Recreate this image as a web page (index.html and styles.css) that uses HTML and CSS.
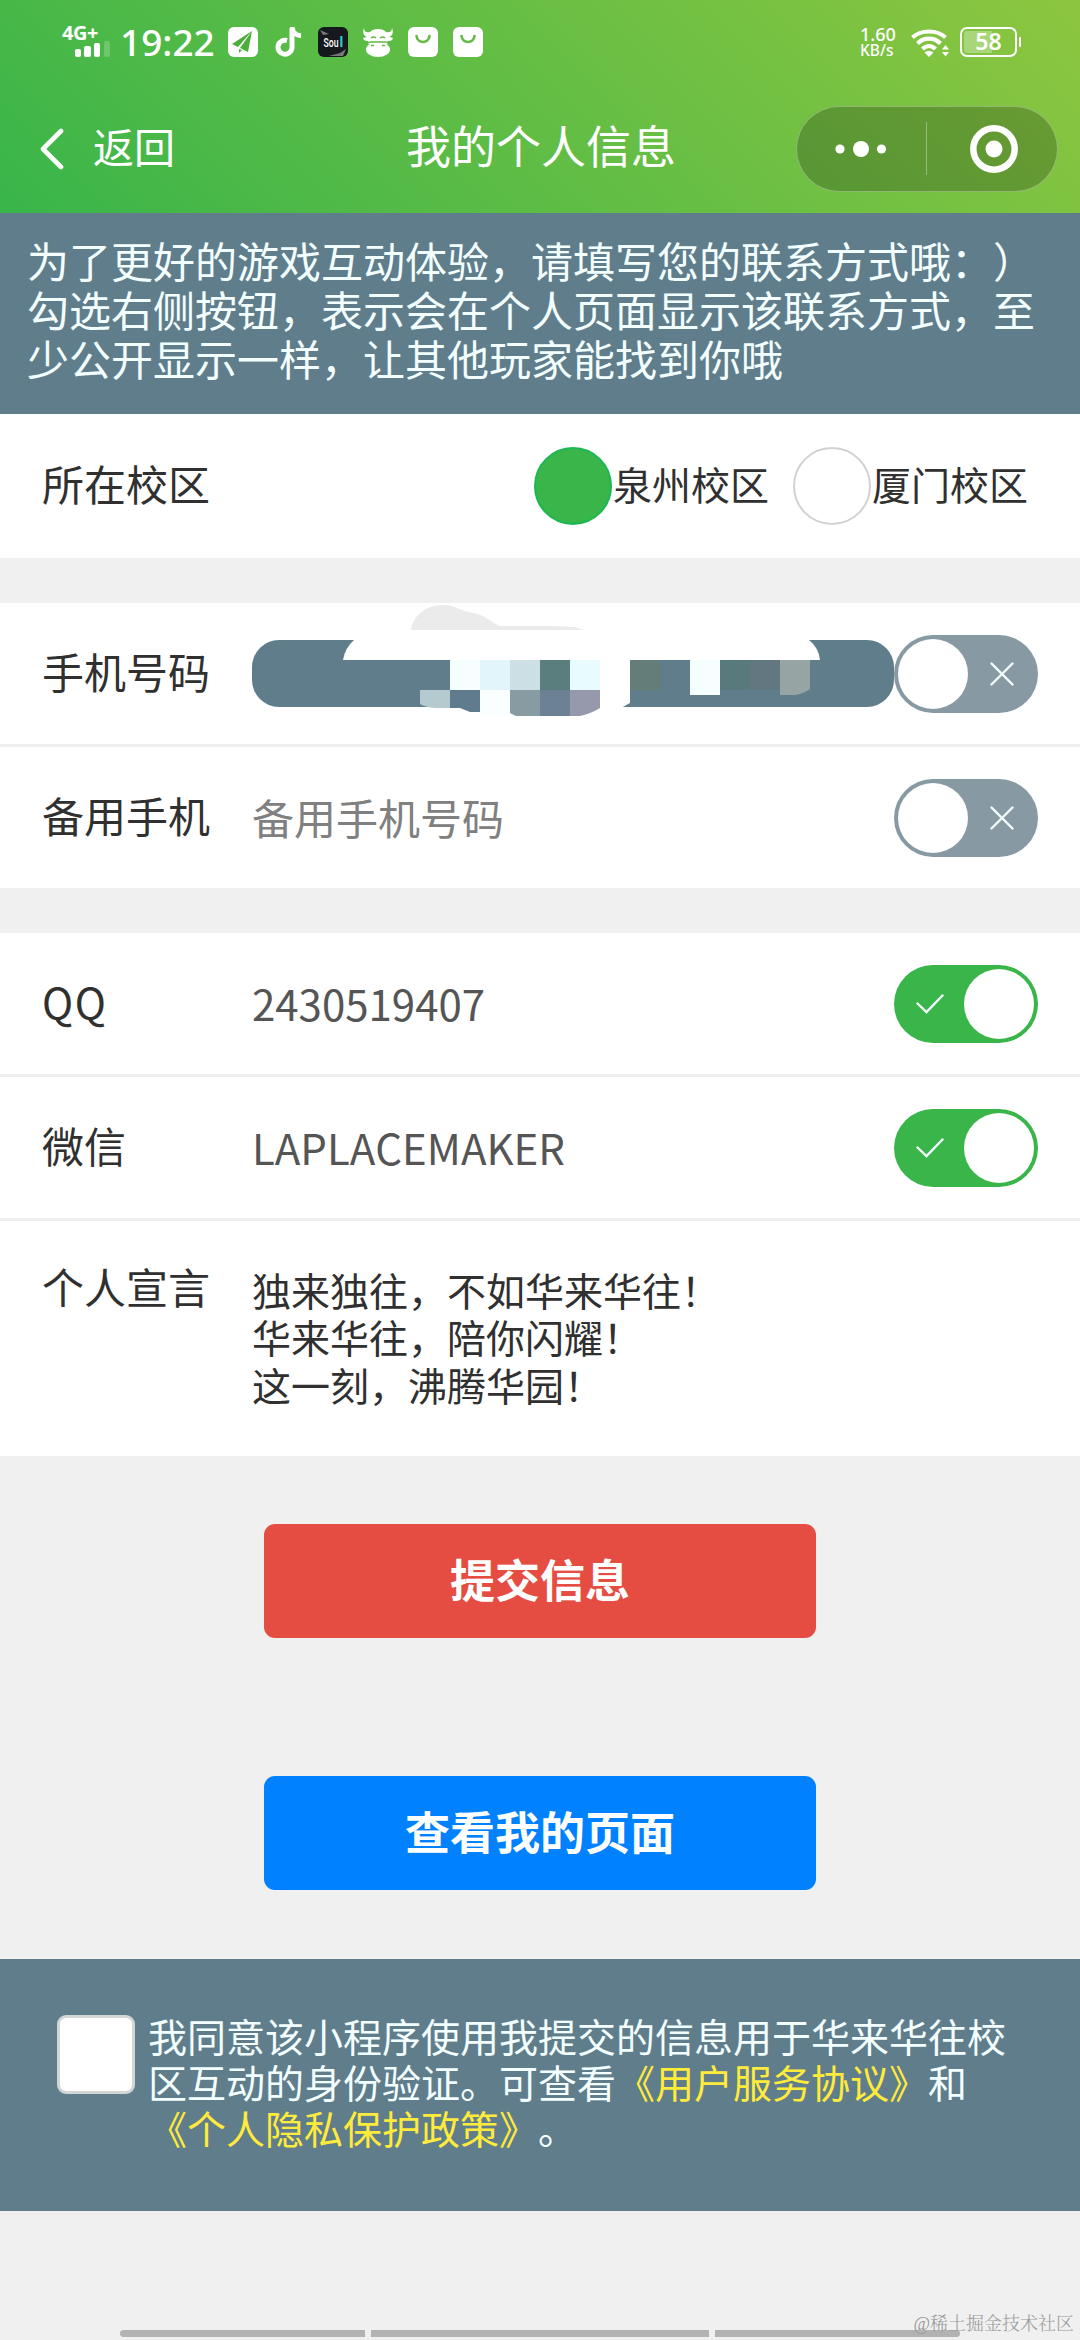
FILE: index.html
```html
<!DOCTYPE html>
<html lang="zh-CN">
<head>
<meta charset="utf-8">
<title>我的个人信息</title>
<link rel="stylesheet" href="styles.css">
</head>
<body>
<header class="header">
  <div class="status">
    <div class="signal">
      <span class="signal-net">4G+</span>
      <svg class="signal-bars" width="36" height="16" viewBox="0 0 36 16"><rect x="0" y="8" width="6" height="8" rx="2"/><rect x="9" y="5" width="7" height="11" rx="2"/><rect x="19" y="2" width="6" height="14" rx="2"/><rect x="29" y="0" width="6" height="16" rx="2" opacity=".2"/></svg>
    </div>
    <span class="clock">19:22</span>
    <div class="apps">
      <svg width="30" height="30" viewBox="0 0 30 30"><rect width="30" height="30" rx="6" fill="#fff"/><path d="M24 4 4 17l6 3zM24 4 12 21l8 4zM11 22v4l3-3z" fill="#4cad3d"/></svg>
      <svg width="30" height="30" viewBox="0 0 30 30"><path d="M14 13.500A7 7 0 1 0 19 21V1" fill="none" stroke="#fff" stroke-width="5"/><path d="M17 0h4.500c.5 4 3 6 6.500 6v5c-5 0-9-3-11-7z" fill="#fff"/></svg>
      <svg width="30" height="30" viewBox="0 0 30 30"><rect width="30" height="30" rx="6" fill="#15181c"/><path d="M2 3l9 4-6 1zM11 29l11-3 6-4-3 7z" fill="#777"/><text x="5.500" y="20" font-family="Roboto, sans-serif" font-size="13" font-weight="500" textLength="15" lengthAdjust="spacingAndGlyphs" fill="#fff">Sou</text><text x="21.500" y="20" font-family="Roboto, sans-serif" font-size="14" font-weight="700" fill="#25d4d0">l</text></svg>
      <svg width="30" height="30" viewBox="0 0 30 30"><path d="M1 1c0 4 3 5 6 4 3-4 13-4 16 0 3 1 6 0 6-4 2 5 0 8-3 9 2 0 3 1 4 1-1 3-3 3-5 3v3H5v-3c-2 0-4 0-5-3 1 0 2-1 4-1C1 9-1 6 1 1z" fill="#fff"/><path d="M8 11q2.500-2 5 0M17 11q2.500-2 5 0" stroke="#62b942" stroke-width="1.300" fill="none"/><ellipse cx="15" cy="22.500" rx="12" ry="7.500" fill="#fff"/><path d="M4.500 17q0-2 3-2h15q3 0 3 2" fill="none" stroke="#62b942" stroke-width="1.500"/><path d="M8 18.500h3M19 18.500h3" stroke="#62b942" stroke-width="1.500"/></svg>
      <svg width="30" height="30" viewBox="0 0 30 30"><rect width="30" height="30" rx="6" fill="#fff"/><path d="M8.500 9c1 8 12 8 13 0" fill="none" stroke="#65b944" stroke-width="2.600" stroke-linecap="round"/></svg>
      <svg width="30" height="30" viewBox="0 0 30 30"><rect width="30" height="30" rx="6" fill="#fff"/><path d="M8.500 9c1 8 12 8 13 0" fill="none" stroke="#65b944" stroke-width="2.600" stroke-linecap="round"/></svg>
    </div>
    <div class="speed"><span class="speed-num">1.60</span><span class="speed-unit">KB/s</span></div>
    <svg class="wifi" width="38" height="29" viewBox="0 0 38 29"><g fill="none" stroke="#fff" stroke-width="4.200"><path d="M1.500 9.500C10 1.500 26 1.500 34.500 9.500"/><path d="M6.500 15.500c6.500-6.500 16.500-6.500 23 0"/><path d="M11.500 21c4-4 9-4 13 0"/></g><path d="M13.500 24.500q4.500-3.500 9 0L18 29z" fill="#fff"/><path d="M31 21.500l3.500-4.500 3.500 4.500zM31 24h7l-3.500 4.500z" fill="#fff"/></svg>
    <div class="battery"><span>58</span></div>
  </div>
  <nav class="nav">
    <svg class="back" width="24" height="42" viewBox="0 0 24 42"><path d="M21 3 3 21l18 18" fill="none" stroke="#fff" stroke-width="4.600" stroke-linecap="round" stroke-linejoin="round"/></svg>
    <span class="back-text">返回</span>
    <h1 class="title">我的个人信息</h1>
    <div class="capsule">
      <svg width="260" height="84" viewBox="0 0 260 84" fill="#fff"><circle cx="43" cy="42" r="4.600"/><circle cx="64" cy="42" r="8"/><circle cx="84.500" cy="42" r="4.600"/><path d="M129 15h1v53h-1z" opacity=".35"/><circle cx="197" cy="42" r="20.700" fill="none" stroke="#fff" stroke-width="6.500"/><circle cx="197" cy="42" r="8.500"/></svg>
    </div>
  </nav>
</header>

<p class="notice">为了更好的游戏互动体验，请填写您的联系方式哦：）<br>勾选右侧按钮，表示会在个人页面显示该联系方式，至<br>少公开显示一样，让其他玩家能找到你哦</p>

<form class="form">
  <section class="group">
    <div class="row row-campus">
      <span class="label">所在校区</span>
      <div class="radios">
        <label class="radio"><i class="dot dot-on"></i><span>泉州校区</span></label>
        <label class="radio"><i class="dot"></i><span>厦门校区</span></label>
      </div>
    </div>
  </section>
  <section class="group">
    <div class="row">
      <span class="label">手机号码</span>
      <span class="phone-pill"></span>
      <span class="switch"><svg class="mark" width="24" height="24" viewBox="0 0 24 24"><path d="M1.500 1.500l21 21M22.500 1.500l-21 21"/></svg></span>
      <svg class="mosaic" width="480" height="120" viewBox="410 600 480 120">
        <path d="M343 660q2-12 11-20v-4h455v4q10 8 11 20z" fill="#fff"/>
        <path d="M411 630c2-14 14-25 32-25 12 0 20 7 30 8 9 1 18 8 26 13h52l24 1 9 3z" fill="#ebebeb"/>
        <path d="M450 660h30v30h-30z" fill="#f6ffff"/><path d="M480 660h30v30h-30z" fill="#e1f5fb"/><path d="M510 660h30v30h-30z" fill="#cbdfe5"/><path d="M540 660h30v30h-30z" fill="#5a7e7e"/><path d="M570 660h30v30h-30z" fill="#e8fbff"/>
        <path d="M600 660h30v43l-9 5-21 3z" fill="#fff"/>
        <path d="M630 660h30v30h-30z" fill="#657d79"/><path d="M690 660h30v35h-30z" fill="#f6ffff"/><path d="M720 660h30v30h-30z" fill="#587a7d"/><path d="M750 660h30v30h-30z" fill="#62777f"/><path d="M780 660h30v29q-7 5-15 6h-15z" fill="#96a5a3"/>
        <path d="M420 690h30v18h-15q-10-1-15-4z" fill="#b4cace"/><path d="M450 690h30v22h-10l-10-4h-10z" fill="#607b8d"/><path d="M480 690h30v26h-30z" fill="#fafefe"/><path d="M510 690h30v26h-24l-6-3z" fill="#879ba3"/><path d="M540 690h30v26h-30z" fill="#6c8194"/><path d="M570 690h30v18q-10 6-20 8h-10z" fill="#9698ac"/>
      </svg>
    </div>
    <div class="row">
      <span class="label">备用手机</span>
      <span class="value placeholder">备用手机号码</span>
      <span class="switch"><svg class="mark" width="24" height="24" viewBox="0 0 24 24"><path d="M1.500 1.500l21 21M22.500 1.500l-21 21"/></svg></span>
    </div>
  </section>
  <section class="group">
    <div class="row">
      <span class="label label-latin">QQ</span>
      <span class="value">2430519407</span>
      <span class="switch switch-on"><svg class="mark" width="28" height="20" viewBox="0 0 28 20"><path d="M1.500 9.500l9 8.500 16-16.500"/></svg></span>
    </div>
    <div class="row">
      <span class="label">微信</span>
      <span class="value">LAPLACEMAKER</span>
      <span class="switch switch-on"><svg class="mark" width="28" height="20" viewBox="0 0 28 20"><path d="M1.500 9.500l9 8.500 16-16.500"/></svg></span>
    </div>
    <div class="row row-bio">
      <span class="label">个人宣言</span>
      <p class="bio">独来独往，不如华来华往！<br>华来华往，陪你闪耀！<br>这一刻，沸腾华园！</p>
    </div>
  </section>
  <div class="actions">
    <button type="button" class="btn btn-red">提交信息</button>
    <button type="button" class="btn btn-blue">查看我的页面</button>
  </div>
</form>

<section class="agree">
  <i class="checkbox"></i>
  <p class="agree-text">我同意该小程序使用我提交的信息用于华来华往校<br>区互动的身份验证。可查看<a class="link">《用户服务协议》</a>和<br><a class="link">《个人隐私保护政策》</a>。</p>
</section>

<footer class="footer">
  <div class="gesture"><i class="g1"></i><i class="g2"></i><i class="g1"></i></div>
  <span class="watermark">@稀土掘金技术社区</span>
</footer>
</body>
</html>
```
FILE: styles.css
```css
* { box-sizing: border-box; margin: 0; padding: 0; }
html { font-kerning: none; }
body {
  width: 1080px;
  height: 2340px;
  overflow: hidden;
  display: flex;
  flex-direction: column;
  background: #f0f0f0;
  color: #303030;
  font-family: "Noto Sans CJK SC", sans-serif;
  font-size: 42px;
  text-spacing-trim: space-all;
}
svg { display: block; flex: none; }
i { display: block; flex: none; }

.header {
  height: 213px;
  color: #fff;
  background: linear-gradient(45deg, #39b54a, #8dc63f);
}
.status { height: 84px; display: flex; align-items: center; padding: 0 60px 0 62px; }
.signal { width: 58px; height: 34px; display: flex; flex-direction: column; }
.signal-net { height: 16px; font: 700 20px/16px "Noto Sans", sans-serif; letter-spacing: -.5px; }
.signal-bars { margin-left: 13px; fill: #fff; }
.clock { width: 108px; font: 500 37px/50px "Noto Sans", sans-serif; }
.apps { display: flex; gap: 15px; }
.speed { margin-left: 377px; width: 51px; display: flex; flex-direction: column; font-family: "Noto Sans", sans-serif; font-weight: 500; }
.speed-num { font-size: 18px; line-height: 17px; }
.speed-unit { font-size: 15.5px; line-height: 15px; }
.wifi { margin-right: 11px; }
.battery {
  position: relative;
  width: 57px;
  height: 30px;
  border: 2.5px solid #fff;
  border-radius: 7px;
  text-align: center;
  font: 600 23px/25px "Noto Sans", sans-serif;
  background: linear-gradient(90deg, rgba(255,255,255,.3) 58%, transparent 58%) content-box;
  padding: 2px;
}
.battery span { display: block; margin-top: -2px; }
.battery::after { content: ""; position: absolute; right: -6px; top: 8px; width: 2px; height: 10px; background: #fff; border-radius: 1px; }

.nav { height: 129px; display: flex; align-items: center; padding-left: 40px; }
.back { margin-right: 29px; }
.back-text { width: 313px; font-size: 41px; line-height: 60px; padding-bottom: 7px; }
.title { width: 390px; font-size: 45px; font-weight: 400; line-height: 66px; padding-bottom: 7px; }
.capsule { width: 262px; height: 86px; border: 1px solid rgba(255,255,255,.3); border-radius: 43px; background: rgba(0,0,0,.21); }

.notice { height: 201px; padding: 22px 27px 0; background: #607d8b; color: #f3ffff; line-height: 49.2px; white-space: nowrap; }

.group { margin-bottom: 45px; background: #fff; }
.group:last-of-type { margin-bottom: 0; }
.row { position: relative; height: 141px; display: flex; align-items: center; padding: 0 42px; }
.row + .row { height: 144px; border-top: 3px solid #eee; }
.label { width: 210px; flex: none; line-height: 60px; padding-bottom: 6px; }
.label-latin { letter-spacing: 1.5px; }
.value { flex: 1; color: #555; padding-bottom: 3px; }
.placeholder { color: #808080; }
.row-campus { height: 144px; padding-right: 52px; }
.row-campus .label { padding-bottom: 7px; }
.radios { display: flex; gap: 24px; margin-left: auto; }
.radio { display: flex; align-items: center; gap: 1px; font-size: 39px; line-height: 56px; }
.radio span { padding-bottom: 6px; }
.dot { width: 78px; height: 78px; border-radius: 50%; border: 2.5px solid #d2d2d2; background: #fff; }
.dot-on { background: #39b54a; border-color: #1bb753; }

.phone-pill { flex: 1; height: 67px; border-radius: 27px; background: #607d8b; }
.mosaic { position: absolute; left: 410px; top: -3px; overflow: visible; }
.switch { position: relative; flex: none; width: 144px; height: 78px; margin-top: 1px; border-radius: 39px; background: #8799a3; display: flex; align-items: center; justify-content: flex-end; padding: 0 24px; }
.switch::before { content: ""; position: absolute; left: 4px; top: 4px; width: 70px; height: 70px; border-radius: 50%; background: #fff; }
.switch-on { background: #39b54a; justify-content: flex-start; padding: 0 22px; }
.switch-on::before { left: 70px; }
.mark { fill: none; stroke: #f6ffff; stroke-width: 2.4; stroke-linecap: round; }
.row + .row-bio { height: 238px; align-items: flex-start; }
.row-bio .label { margin-top: 35px; }
.bio { margin-top: 45px; font-size: 39px; line-height: 47.4px; }

.actions { display: flex; flex-direction: column; align-items: center; gap: 138px; padding-top: 68px; height: 503px; }
.btn { width: 552px; height: 114px; border: 0; border-radius: 11px; color: #fff; font: 700 45px/1 "Noto Sans CJK SC", sans-serif; padding-bottom: 5px; }
.btn-red { background: #e54d42; }
.btn-blue { background: #0081ff; }

.agree { height: 252px; display: flex; gap: 13px; padding: 53px 57px 0; background: #607d8b; color: #f3ffff; }
.checkbox { margin-top: 3px; width: 78px; height: 79px; border: 3px solid #d2d6d4; border-radius: 9px; background: #fff; }
.agree-text { font-size: 39px; line-height: 46.2px; white-space: nowrap; }
.link { color: #ffeb3b; }

.footer { position: relative; height: 129px; display: flex; align-items: flex-end; padding: 0 120px 3px; }
.gesture { display: flex; gap: 6px; }
.gesture i { height: 7px; background: #b2b2b2; }
.g1 { width: 245px; }
.g2 { width: 338px; }
.gesture i:first-child { border-radius: 4px 0 0 4px; }
.gesture i:last-child { border-radius: 0 4px 4px 0; }
.watermark { position: absolute; right: 6px; bottom: 2px; font: 300 18px/28px "Liberation Serif", "Noto Serif CJK SC", "Noto Sans CJK SC", serif; color: #999; white-space: nowrap; }
```
